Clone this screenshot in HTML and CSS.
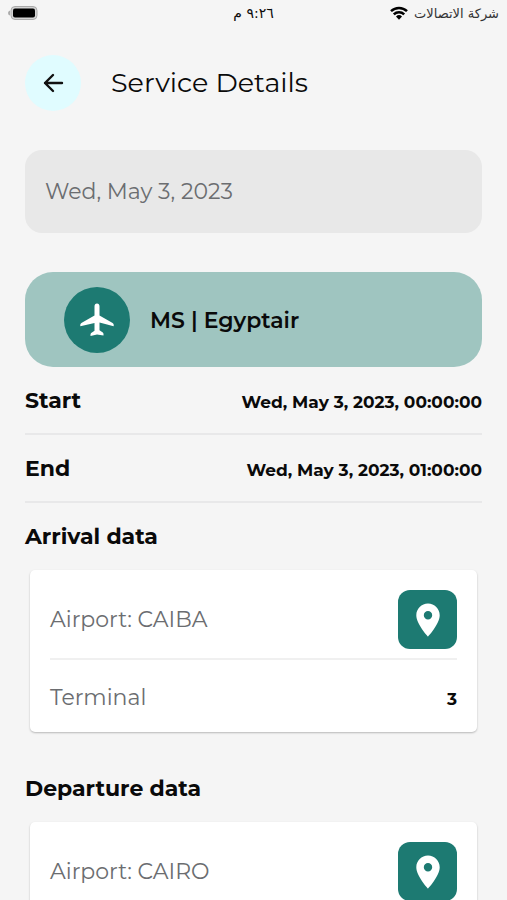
FILE: index.html
```html
<!DOCTYPE html>
<html lang="en">
<head>
<meta charset="utf-8">
<meta name="viewport" content="width=device-width, initial-scale=1">
<title>Service Details</title>
<link rel="stylesheet" href="styles.css">
</head>
<body>
<div class="status" dir="rtl" lang="ar">
  <div class="status-carrier">
    <span>شركة الاتصالات</span>
    <svg class="wifi" viewBox="0 0 18 14" aria-hidden="true">
      <path d="M1 5.1a11.6 11.6 0 0 1 16 0M3.8 8.300a7.5 7.5 0 0 1 10.4 0" fill="none" stroke="#000" stroke-width="2.5"/>
      <path d="M6 10.5a4.3 4.3 0 0 1 6 0l-3 3.3z"/>
    </svg>
  </div>
  <time class="status-time">٩:٢٦ م</time>
  <div class="status-battery">
    <svg class="battery" viewBox="0 0 30 14" aria-hidden="true">
      <path d="M2 4.5v5Q0 9 0 7t2-2.500z" fill="#aaa"/>
      <rect x="3" y="0.500" width="26" height="13" rx="4" fill="#d4d4d4" stroke="#aaa"/>
      <rect x="5" y="2.500" width="22" height="9" rx="2"/>
    </svg>
  </div>
</div>

<header class="header">
  <button class="back" type="button" aria-label="Back">
    <svg viewBox="0 0 24 24" aria-hidden="true"><path d="M21 12H4M12 4l-8 8 8 8" fill="none" stroke="#111" stroke-width="2.400" stroke-linecap="round" stroke-linejoin="round"/></svg>
  </button>
  <h1 class="title">Service Details</h1>
</header>

<main class="content">
  <div class="date">Wed, May 3, 2023</div>

  <div class="airline">
    <span class="airline-icon">
      <svg viewBox="0 0 34 34" aria-hidden="true"><path d="M17 .5c1.600 0 2.500 1.300 2.500 2.800v9.200l12.700 7.200c1 .6 1.500 1.300 1.500 2.300v1.200l-14.200-3.600v7.700l3.300 2.300c.5.400.7.900.7 1.500v1.500L17 31.500l-6.500 1.600v-1.500c0-.6.2-1.100.7-1.500l3.300-2.300v-7.700L.3 23.200V22c0-1 .5-1.700 1.500-2.300l12.700-7.200V3.300C14.500 1.800 15.400.5 17 .5z" fill="#fff"/></svg>
    </span>
    <span class="airline-name">MS | Egyptair</span>
  </div>

  <dl class="times">
    <div class="time-row"><dt>Start</dt><dd>Wed, May 3, 2023, 00:00:00</dd></div>
    <div class="time-row"><dt>End</dt><dd>Wed, May 3, 2023, 01:00:00</dd></div>
  </dl>

  <section class="leg">
    <h2 class="leg-title">Arrival data</h2>
    <div class="card">
      <div class="airport">
        <span>Airport: CAIBA</span>
        <button class="pin" type="button" aria-label="Show CAIBA on map">
          <svg viewBox="0 0 24 34" aria-hidden="true"><path fill-rule="evenodd" d="M12 .5C5.500.5.300 5.700.300 12.200.300 21 12 33.500 12 33.500S23.700 21 23.700 12.200C23.700 5.700 18.500.5 12 .5zm0 7.500a4.200 4.200 0 1 1 0 8.400 4.200 4.200 0 0 1 0-8.400z" fill="#fff"/></svg>
        </button>
      </div>
      <div class="terminal"><span>Terminal</span><strong>3</strong></div>
    </div>
  </section>

  <section class="leg">
    <h2 class="leg-title">Departure data</h2>
    <div class="card">
      <div class="airport">
        <span>Airport: CAIRO</span>
        <button class="pin" type="button" aria-label="Show CAIRO on map">
          <svg viewBox="0 0 24 34" aria-hidden="true"><path fill-rule="evenodd" d="M12 .5C5.500.5.300 5.700.300 12.200.300 21 12 33.500 12 33.500S23.700 21 23.700 12.200C23.700 5.700 18.500.5 12 .5zm0 7.500a4.200 4.200 0 1 1 0 8.400 4.200 4.200 0 0 1 0-8.400z" fill="#fff"/></svg>
        </button>
      </div>
    </div>
  </section>
</main>
</body>
</html>
```

FILE: styles.css
```css
* {
  box-sizing: border-box;
}

body {
  margin: 0;
  height: 100vh;
  display: flex;
  flex-direction: column;
  overflow: hidden;
  background: #f5f5f5;
  color: #0a0a0a;
  font-family: Montserrat, Inter, sans-serif;
}

h1,
h2,
dl,
dd {
  margin: 0;
}

svg {
  display: block;
}

button {
  display: grid;
  place-items: center;
  flex: none;
  padding: 0;
  border: 0;
  cursor: pointer;
}

.status {
  display: grid;
  grid-template-columns: 1fr auto 1fr;
  align-items: center;
  height: 26px;
  padding: 0 8px;
  font-family: "DejaVu Sans", sans-serif;
  font-size: 13px;
  flex: none;
}

.status-carrier {
  display: flex;
  align-items: center;
  gap: 6px;
  color: #333;
}

.status-time {
  font-size: 14px;
}

.status-battery {
  display: flex;
  justify-content: flex-end;
}

.wifi {
  width: 18px;
  height: 14px;
}

.battery {
  width: 30px;
  height: 14px;
}

.header {
  display: flex;
  align-items: center;
  gap: 30px;
  padding: 29px 25px 39px;
  flex: none;
}

.back {
  width: 56px;
  height: 56px;
  border-radius: 50%;
  background: #e0fcff;
}

.back svg {
  width: 24px;
  height: 24px;
}

.title {
  font-size: 27px;
  font-weight: 400;
  line-height: 36px;
}

.content {
  flex: 1;
  min-height: 0;
  overflow-y: auto;
  scrollbar-width: none;
  padding: 0 25px 25px;
}

.date {
  padding: 27px 20px 26px;
  border-radius: 17px;
  background: #e8e8e8;
  color: #6b6d70;
  font-size: 22px;
  line-height: 30px;
}

.airline {
  display: flex;
  align-items: center;
  gap: 20px;
  margin-top: 39px;
  padding: 15px 39px 14px;
  border-radius: 28px;
  background: #9fc5c0;
}

.airline-icon {
  display: grid;
  place-items: center;
  width: 66px;
  height: 66px;
  border-radius: 50%;
  background: #1d7a72;
}

.airline-icon svg {
  width: 34px;
  height: 34px;
}

.airline-name {
  font-size: 22px;
  font-weight: 600;
}

.time-row {
  display: flex;
  align-items: center;
  justify-content: space-between;
  padding: 19px 0 17px;
  border-bottom: 2px solid #e8e8e9;
}

.time-row dt,
.leg-title {
  font-size: 22px;
  font-weight: 700;
  line-height: 30px;
}

.time-row dd,
.terminal strong {
  padding-top: 2px;
  font-size: 17px;
  font-weight: 700;
}

.leg-title {
  padding: 19px 0 18px;
}

.card {
  margin: 0 5px 23px;
  padding: 20px 20px 18px;
  border-radius: 5px;
  background: #fff;
  box-shadow: 0 1px 2px rgba(0, 0, 0, 0.25);
  color: #6b6d70;
  font-size: 22px;
  line-height: 30px;
}

.airport,
.terminal {
  display: flex;
  align-items: center;
  justify-content: space-between;
}

.pin {
  width: 59px;
  height: 59px;
  border-radius: 12px;
  background: #1d7a72;
}

.pin svg {
  width: 24px;
  height: 34px;
}

.terminal {
  margin-top: 9px;
  padding-top: 22px;
  border-top: 2px solid #f0f0f0;
}

.terminal strong {
  color: #0a0a0a;
}
```
